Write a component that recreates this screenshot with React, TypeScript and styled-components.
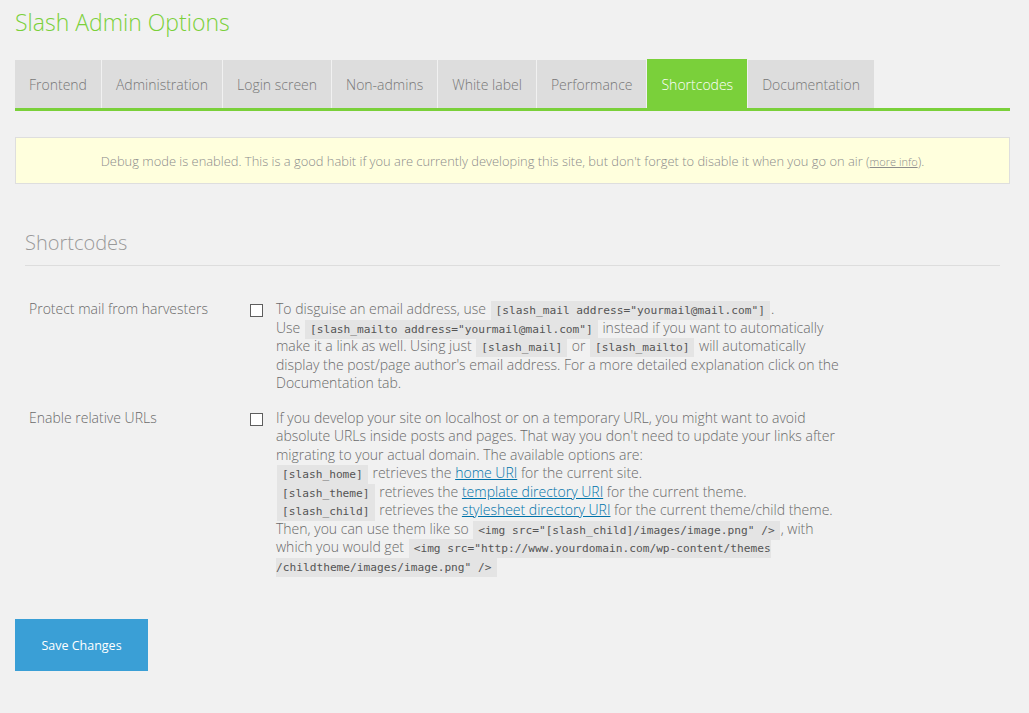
import React from 'react';
import styled, { createGlobalStyle } from 'styled-components';

const GlobalStyle = createGlobalStyle`
  html, body {
    margin: 0;
    padding: 0;
    background: #f1f1f1;
    font-family: "Open Sans", "Liberation Sans", sans-serif;
  }
`;

const Wrapper = styled.div`
  padding: 6px 19px 40px 15px;
  min-height: 713px;
  box-sizing: border-box;
`;

const Title = styled.h1`
  margin: 0;
  font-size: 23px;
  font-weight: 300;
  line-height: 32px;
  color: #7ad03a;
`;

const Tabs = styled.nav`
  display: flex;
  align-items: flex-end;
  margin-top: 21px;
  border-bottom: 3px solid #7ad03a;
  height: 49px;
`;

const Tab = styled.a<{ $active?: boolean }>`
  display: flex;
  align-items: center;
  height: ${({ $active }) => ($active ? '49px' : '48px')};
  padding: 0 14px;
  margin-right: 1px;
  background: ${({ $active }) => ($active ? '#7ad03a' : '#dddddd')};
  color: ${({ $active }) => ($active ? '#ffffff' : '#777777')};
  font-size: 14px;
  font-weight: 300;
  text-decoration: none;
  padding-top: 1px;
  box-sizing: border-box;
`;

const Notice = styled.div`
  margin-top: 26px;
  height: 47px;
  box-sizing: border-box;
  background: #ffffdd;
  border: 1px solid #dedede;
  display: flex;
  align-items: center;
  justify-content: center;
  font-size: 12.9px;
  font-weight: 300;
  color: #8c8c8c;

  & a {
    color: #8c8c8c;
    font-size: 11px;
    text-decoration: underline;
  }
`;

const Section = styled.section`
  padding: 0 10px;
  margin-top: 43px;
`;

const SectionTitle = styled.h2`
  margin: 0;
  padding-bottom: 6px;
  font-size: 20px;
  font-weight: 300;
  color: #999999;
  line-height: 32px;
  border-bottom: 1px solid #dddddd;
`;

const Table = styled.div`
  margin-top: 34px;
  display: flex;
  flex-direction: column;
  gap: 16px;
`;

const Row = styled.div`
  display: grid;
  grid-template-columns: 208px 13px 565px;
  column-gap: 13px;
  padding-left: 4px;
  align-items: start;
`;

const Label = styled.div`
  font-size: 14px;
  font-weight: 300;
  color: #6a6a6a;
  line-height: 18.5px;
`;

const Checkbox = styled.span`
  width: 13px;
  height: 13px;
  box-sizing: border-box;
  border: 1px solid #5e5e5e;
  background: #ffffff;
  margin-top: 4px;
`;

const Desc = styled.div`
  font-size: 14px;
  font-weight: 300;
  color: #6a6a6a;
  line-height: 18.5px;

  & a {
    color: #0073aa;
    text-decoration: underline;
  }
`;

const Code = styled.code`
  font-family: "DejaVu Sans Mono", "Liberation Mono", monospace;
  font-size: 11.2px;
  line-height: 1;
  color: #555555;
  background: #e4e4e4;
  padding: 3px 5px 3px;
  margin: 0 1px;
`;

const Button = styled.button`
  margin-top: 44px;
  width: 133px;
  height: 52px;
  border: none;
  background: #3a9fd6;
  color: #ffffff;
  font-family: "Open Sans", "Liberation Sans", sans-serif;
  font-size: 12.5px;
  font-weight: 400;
  cursor: pointer;
`;

const tabs = [
  'Frontend',
  'Administration',
  'Login screen',
  'Non-admins',
  'White label',
  'Performance',
  'Shortcodes',
  'Documentation',
];

export default function App() {
  return (
    <>
      <GlobalStyle />
      <Wrapper>
        <Title>Slash Admin Options</Title>
        <Tabs>
          {tabs.map((t) => (
            <Tab key={t} $active={t === 'Shortcodes'} href="#">
              {t}
            </Tab>
          ))}
        </Tabs>
        <Notice>
          <span>
            Debug mode is enabled. This is a good habit if you are currently developing this site, but
            don't forget to disable it when you go on air (<a href="#">more info</a>).
          </span>
        </Notice>
        <Section>
          <SectionTitle>Shortcodes</SectionTitle>
          <Table>
            <Row>
              <Label>Protect mail from harvesters</Label>
              <Checkbox />
              <Desc>
                To disguise an email address, use <Code>[slash_mail address="yourmail@mail.com"]</Code>.
                <br />
                Use <Code>[slash_mailto address="yourmail@mail.com"]</Code> instead if you want to
                automatically make it a link as well. Using just <Code>[slash_mail]</Code> or{' '}
                <Code>[slash_mailto]</Code> will automatically display the post/page author's email
                address. For a more detailed explanation click on the Documentation tab.
              </Desc>
            </Row>
            <Row>
              <Label>Enable relative URLs</Label>
              <Checkbox />
              <Desc>
                If you develop your site on localhost or on a temporary URL, you might want to avoid
                absolute URLs inside posts and pages. That way you don't need to update your links after
                migrating to your actual domain. The available options are:
                <br />
                <Code>[slash_home]</Code> retrieves the <a href="#">home URI</a> for the current site.
                <br />
                <Code>[slash_theme]</Code> retrieves the <a href="#">template directory URI</a> for the
                current theme.
                <br />
                <Code>[slash_child]</Code> retrieves the <a href="#">stylesheet directory URI</a> for the
                current theme/child theme.
                <br />
                Then, you can use them like so{' '}
                <Code>&lt;img src="[slash_child]/images/image.png" /&gt;</Code>, with which you would get{' '}
                <Code>
                  &lt;img src="http://www.yourdomain.com/wp-content/themes /childtheme/images/image.png"
                  /&gt;
                </Code>
              </Desc>
            </Row>
          </Table>
        </Section>
        <Button>Save Changes</Button>
      </Wrapper>
    </>
  );
}
